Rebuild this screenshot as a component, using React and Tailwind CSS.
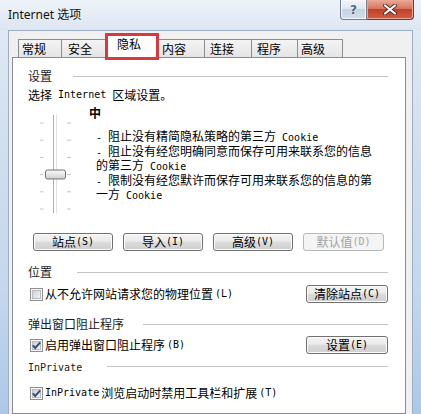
import React from "react";

const M = ({ children }) => (
  <span className="font-['DejaVu_Sans_Mono',monospace] text-[10px]">{children}</span>
);

const Btn = ({ children, disabled, className = "" }) => (
  <div
    className={`h-[18px] flex items-center justify-center rounded-[3px] border whitespace-nowrap ${
      disabled
        ? "border-[#b5b9bd] text-[#a3a3a3] bg-[#f4f4f4]"
        : "border-[#707070] text-black bg-[linear-gradient(to_bottom,#f3f3f3_0%,#ebebeb_45%,#dcdcdc_50%,#cfcfcf_100%)] shadow-[inset_0_0_0_1px_#fcfcfc]"
    } ${className}`}
  >
    {children}
  </div>
);

const Check = ({ checked }) => (
  <svg width="13" height="13" viewBox="0 0 13 13" className="shrink-0">
    <defs>
      <linearGradient id="cbg" x1="0" y1="0" x2="1" y2="1">
        <stop offset="0" stopColor="#cbcfd5" />
        <stop offset="1" stopColor="#f4f4f4" />
      </linearGradient>
    </defs>
    <rect x="0.5" y="0.5" width="12" height="12" fill="#f6f6f6" stroke="#8e8f8f" />
    <rect x="2.5" y="2.5" width="8" height="8" fill="url(#cbg)" stroke="#b9bcc0" />
    {checked && (
      <path d="M2.8 6.4 L5.2 9 L10.2 3.4" stroke="#3a4d7d" strokeWidth="2" fill="none" />
    )}
  </svg>
);

const Section = ({ children, lineMl, className = "" }) => (
  <div className={`flex items-center h-[14px] ${className}`}>
    <span className="whitespace-nowrap text-[#1a1a1a]">{children}</span>
    <div className={`flex-1 h-px bg-[#c3c3c3] ${lineMl}`} />
  </div>
);

const Slider = () => {
  const ticks = [17, 34.2, 51.4, 68.6, 85.8, 103];
  return (
    <svg width="33" height="113" viewBox="0 0 33 113" className="shrink-0">
      <defs>
        <linearGradient id="thumb" x1="0" y1="0" x2="0" y2="1">
          <stop offset="0" stopColor="#f7f7f7" />
          <stop offset="0.5" stopColor="#e6e6e6" />
          <stop offset="1" stopColor="#cdcdcd" />
        </linearGradient>
      </defs>
      {ticks.map((y) => (
        <g key={y}>
          <line x1="0" y1={y} x2="3.5" y2={y} stroke="#c4c4c4" strokeWidth="1" />
          <line x1="27" y1={y} x2="31" y2={y} stroke="#c4c4c4" strokeWidth="1" />
        </g>
      ))}
      <line x1="13.5" y1="9" x2="13.5" y2="107" stroke="#b0b0b0" />
      <line x1="16.5" y1="9" x2="16.5" y2="107" stroke="#e2e2e2" />
      <line x1="15" y1="9" x2="15" y2="107" stroke="#ffffff" strokeWidth="2" />
      <rect x="5.5" y="64" width="20" height="9" rx="2" fill="url(#thumb)" stroke="#727272" />
    </svg>
  );
};

const tabs = [
  { label: "常规", w: "w-[44px]", pl: "pl-[3px]" },
  { label: "安全", w: "w-[46px]", pl: "pl-[6px]" },
  { label: "隐私", w: "w-[50px]", pl: "pl-[9px]", active: true },
  { label: "内容", w: "w-[49px]", pl: "pl-[5px]" },
  { label: "连接", w: "w-[48px]", pl: "pl-[5px]" },
  { label: "程序", w: "w-[47px]", pl: "pl-[5px]" },
  { label: "高级", w: "w-[46px]", pl: "pl-[3px]" },
];

export default function App() {
  return (
    <div className="w-[421px] h-[414px] overflow-hidden flex flex-col bg-[linear-gradient(to_bottom,#e4ecf6_0%,#d3e0ef_30%,#c4d7ec_70%,#adc8e7_100%)] font-['Noto_Sans_CJK_SC',sans-serif] text-[12px] text-black leading-none">
      {/* title bar */}
      <div className="h-[30px] shrink-0 flex justify-between bg-[linear-gradient(to_bottom,#eef3f9,#dce6f2)]">
        <div className="pl-[8px] flex items-center text-[12px] text-[#111] font-['Noto_Sans','Noto_Sans_CJK_SC',sans-serif]">
          Internet 选项
        </div>
        <div className="flex mr-[7px] h-[20px]">
          <div className="w-[27px] h-[20px] flex items-center justify-center rounded-bl-[4px] border border-t-0 border-[#6f7f96] bg-[linear-gradient(to_bottom,#f1f5fa_0%,#dfe7f1_45%,#c6d3e3_50%,#d3dfee_100%)] shadow-[inset_0_0_0_1px_#f4f7fb]">
            <span className="font-['DejaVu_Sans',sans-serif] font-bold text-[12px] text-[#56657c] [text-shadow:0_0_2px_#fff]">?</span>
          </div>
          <div className="w-[47px] h-[20px] flex items-center justify-center rounded-br-[4px] border border-t-0 border-l-0 border-[#6b3a33] bg-[linear-gradient(to_bottom,#e9a998_0%,#d9755f_45%,#c2412a_50%,#d0603f_100%)] shadow-[inset_0_0_0_1px_#e9a695]">
            <svg width="14" height="11" viewBox="0 0 14 11">
              <path d="M2 1.5 L12 9.5 M12 1.5 L2 9.5" stroke="#5a2a24" strokeWidth="4" strokeLinecap="round" />
              <path d="M2 1.5 L12 9.5 M12 1.5 L2 9.5" stroke="#ffffff" strokeWidth="2.2" strokeLinecap="round" />
            </svg>
          </div>
        </div>
      </div>

      {/* dialog body */}
      <div className="ml-[8px] w-[405px] flex-1 bg-[#f0f0f0] border-x border-t border-[#9eaec2] pl-[3px] flex flex-col">
        {/* tabs */}
        <div className="mt-[3px] h-[23px] pl-[6px] flex items-end shrink-0">
          {tabs.map((t) =>
            t.active ? (
              <div
                key={t.label}
                className={`relative z-10 ${t.w} h-[24px] -mb-[1px] ${t.pl} pt-[3px] bg-white border-x border-t border-[#898c95]`}
              >
                {t.label}
                <span className="absolute -left-[3px] -right-[3px] -top-[2px] -bottom-[2px] border-[3px] border-[#d8393f]" />
              </div>
            ) : (
              <div
                key={t.label}
                className={`${t.w} h-[18px] ${t.pl} flex items-center pt-[1px] border-x border-t border-[#898c95] -ml-px first:ml-0 bg-[linear-gradient(to_bottom,#f4f4f4,#e5e5e5)]`}
              >
                {t.label}
              </div>
            )
          )}
        </div>

        {/* panel */}
        <div className="w-[394px] flex-1 bg-white border border-[#898c95] pl-[15px] pr-[17px] flex flex-col">
          <Section className="mt-[11px]" lineMl="ml-[21px]">设置</Section>

          <div className="mt-[5px] h-[14px] flex items-center whitespace-nowrap">
            选择 <M>&nbsp;Internet&nbsp;</M> 区域设置。
          </div>

          <div className="mt-[4px] h-[113px] flex">
            <div className="ml-[12px]">
              <Slider />
            </div>
            <div className="ml-[16px] flex flex-col">
              <div className="h-[14px] flex items-center font-bold">中</div>
              <div className="mt-[10px] ml-[7px] leading-[12.5px] whitespace-nowrap">
                <div><M>- </M>阻止没有精简隐私策略的第三方<M> Cookie</M></div>
                <div><M>- </M>阻止没有经您明确同意而保存可用来联系您的信息</div>
                <div>的第三方<M> Cookie</M></div>
                <div><M>- </M>限制没有经您默许而保存可用来联系您的信息的第</div>
                <div>一方<M> Cookie</M></div>
              </div>
            </div>
          </div>

          <div className="mt-[14px] ml-[5px] flex gap-[10px]">
            <Btn className="w-[80px]">站点<M>(S)</M></Btn>
            <Btn className="w-[80px]">导入<M>(I)</M></Btn>
            <Btn className="w-[80px]">高级<M>(V)</M></Btn>
            <Btn className="w-[81px]" disabled>默认值<M>(D)</M></Btn>
          </div>

          <Section className="mt-[14px]" lineMl="ml-[25px]">位置</Section>

          <div className="mt-[6px] h-[18px] flex items-center justify-between">
            <div className="ml-[2px] flex items-center gap-[2px] whitespace-nowrap">
              <Check />
              从不允许网站请求您的物理位置<M>(L)</M>
            </div>
            <Btn className="w-[82px]">清除站点<M>(C)</M></Btn>
          </div>

          <Section className="mt-[14px]" lineMl="ml-[19px]">弹出窗口阻止程序</Section>

          <div className="mt-[5px] h-[18px] flex items-center justify-between">
            <div className="ml-[2px] flex items-center gap-[2px] whitespace-nowrap">
              <Check checked />
              启用弹出窗口阻止程序<M>(B)</M>
            </div>
            <Btn className="w-[82px]">设置<M>(E)</M></Btn>
          </div>

          <Section className="mt-[5px]" lineMl="ml-[25px]">
            <M>InPrivate</M>
          </Section>

          <div className="mt-[13px] h-[14px] ml-[2px] flex items-center gap-[2px] whitespace-nowrap">
            <Check checked />
            <M>InPrivate </M>浏览启动时禁用工具栏和扩展<M>(T)</M>
          </div>
        </div>
      </div>
    </div>
  );
}
